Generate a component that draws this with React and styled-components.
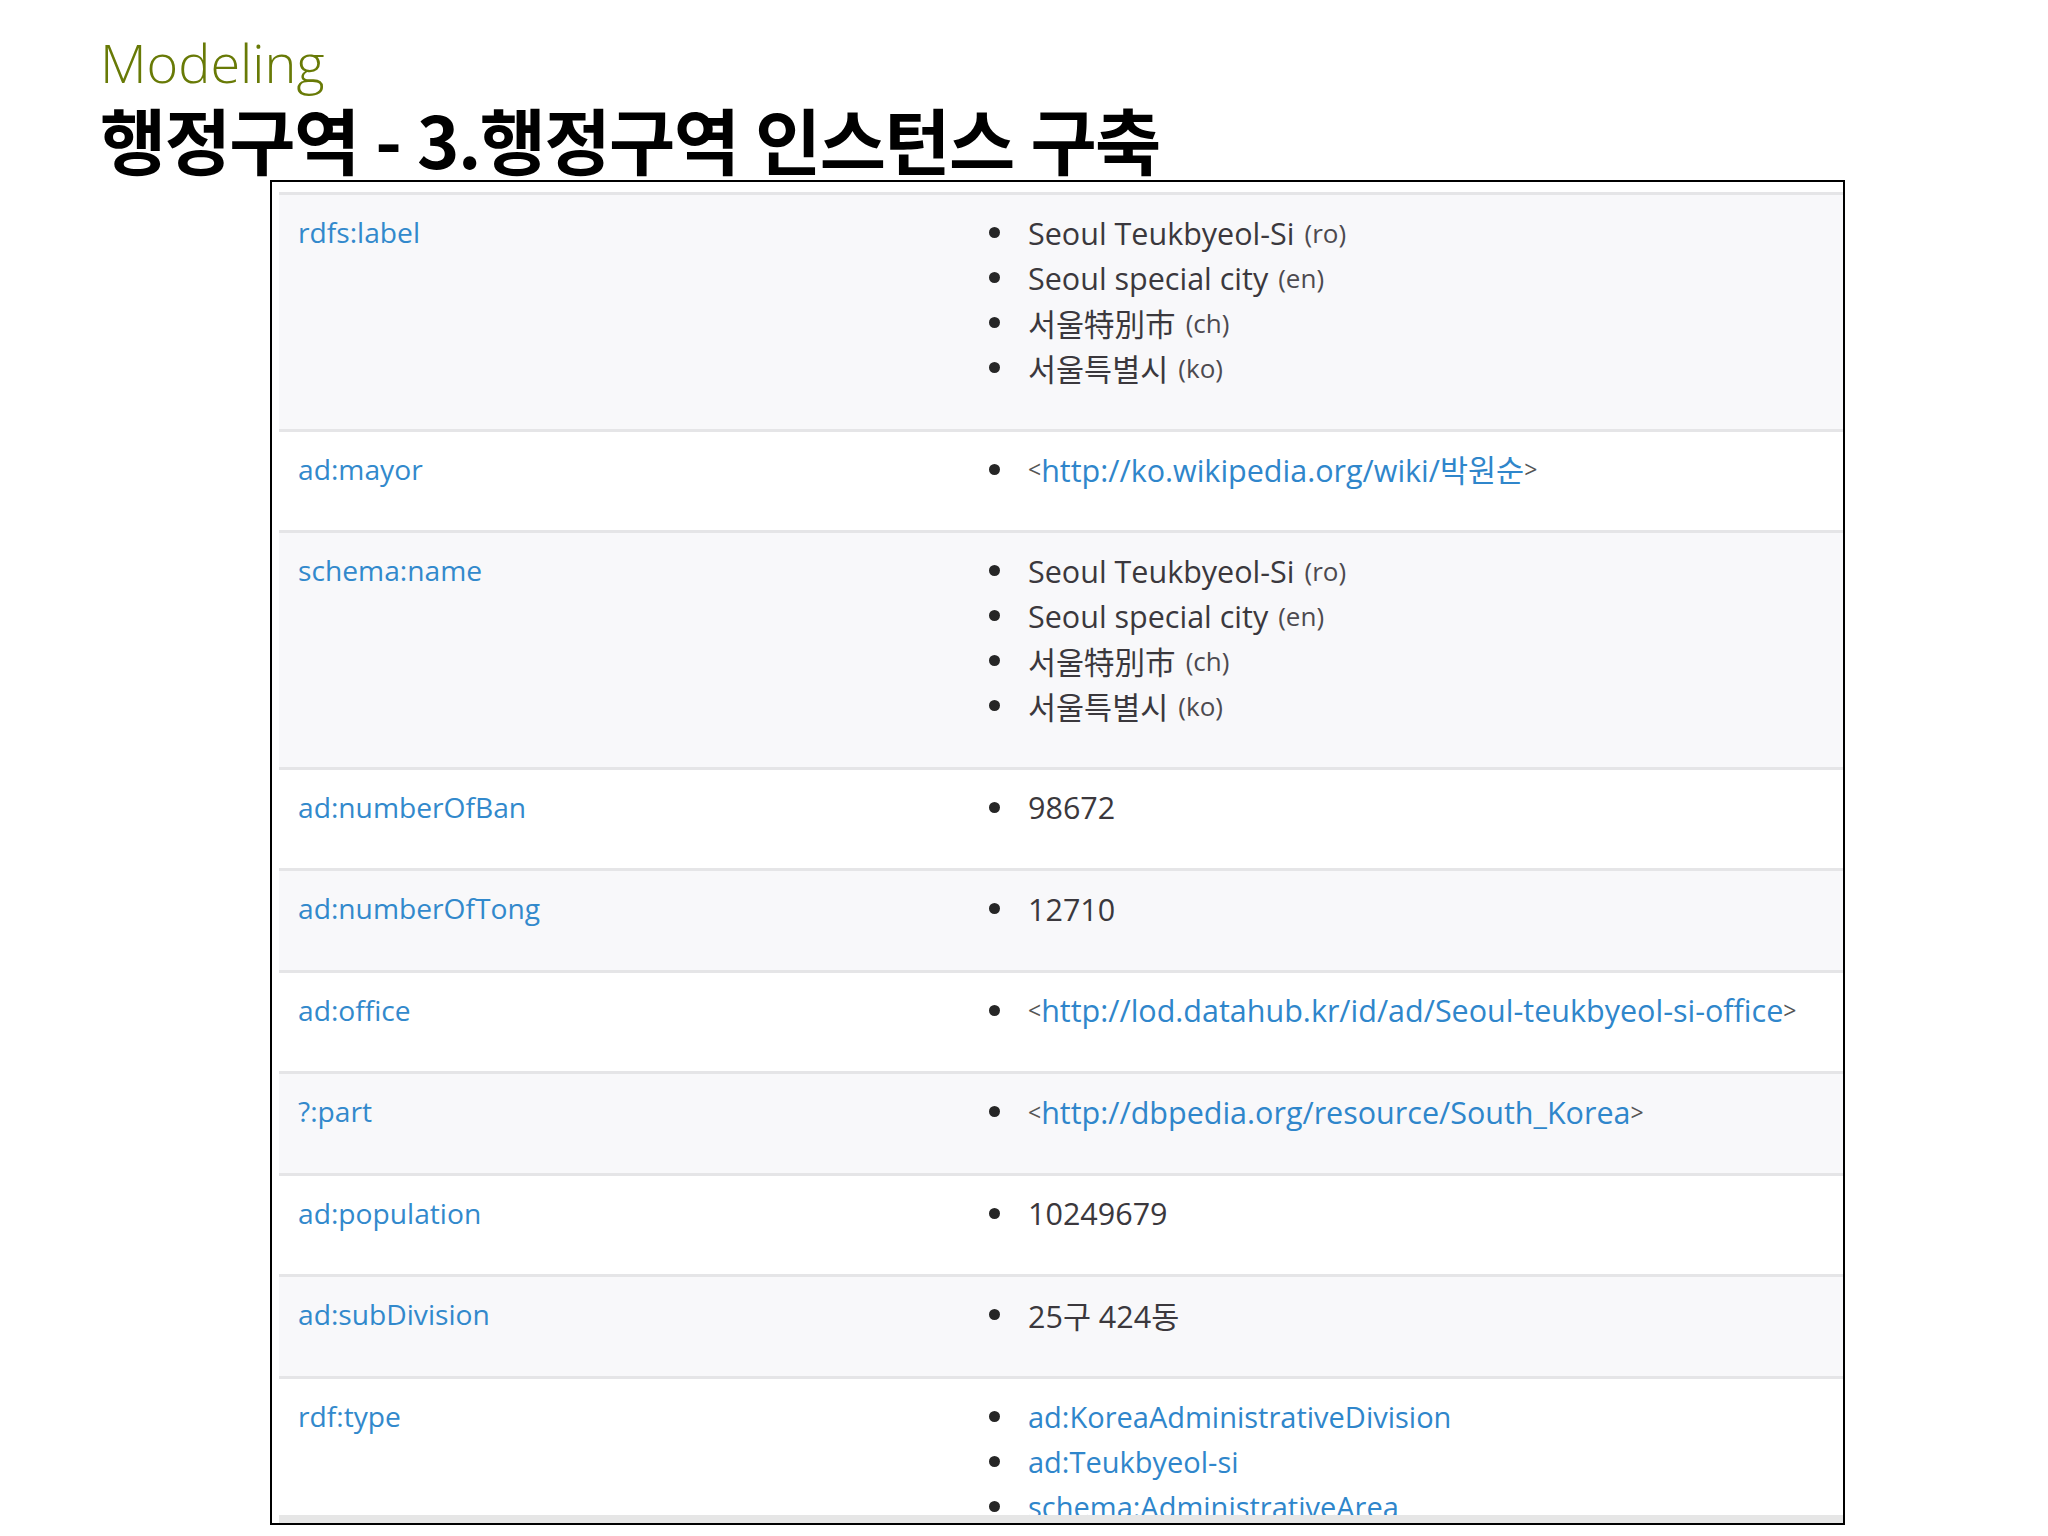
import React from 'react'
import styled, { createGlobalStyle } from 'styled-components'

const GlobalStyle = createGlobalStyle`
  html, body {
    margin: 0;
    padding: 0;
    background: #fff;
  }
  body {
    width: 2048px;
    height: 1536px;
    overflow: hidden;
    font-family: 'Open Sans', 'Noto Sans CJK KR', sans-serif;
  }
`

const Slide = styled.div`
  padding: 30px 0 0 100px;
`

const Kicker = styled.div`
  font-family: 'Open Sans', sans-serif;
  font-weight: 300;
  font-size: 54px;
  line-height: 64px;
  color: #687a06;
`

const Title = styled.h1`
  margin: 4px 0 0 0;
  font-family: 'Noto Sans CJK KR', sans-serif;
  font-weight: 700;
  font-size: 72px;
  line-height: 80px;
  letter-spacing: -1.6px;
  word-spacing: 2px;
  color: #000;
`

const Frame = styled.div`
  box-sizing: border-box;
  margin: 2px 0 0 170px;
  width: 1575px;
  height: 1345px;
  border: 2px solid #000;
  padding: 10px 0 0 7px;
  display: flex;
  flex-direction: column;
  background: #fff;
`

const Rows = styled.div`
  flex: 1;
  overflow: hidden;
`

const ScrollStrip = styled.div`
  height: 8px;
  background: #e6e6e6;
`

const Row = styled.div`
  display: grid;
  grid-template-columns: 711px 1fr;
  border-top: 3px solid #e5e5e7;
  padding: 15px 0 38.5px;
  background: ${p => (p.shaded ? '#f8f8fa' : '#fff')};
`

const Prop = styled.div`
  padding-left: 19px;
  font-size: 28.2px;
  line-height: 45px;
  color: #3289cc;
`

const Values = styled.ul`
  list-style: none;
  margin: 0;
  padding: 0;
`

const Item = styled.li`
  display: flex;
  align-items: center;
  height: 45px;
  font-size: ${p => (p.small ? '29px' : '30.5px')};
  color: ${p => (p.link ? '#2f86cb' : '#3b383d')};
  white-space: nowrap;
`

const Dot = styled.span`
  flex: none;
  width: 11px;
  height: 11px;
  border-radius: 50%;
  background: #262626;
  margin: 0 28px 0 -1px;
`

const Angle = styled.span`
  font-size: 23px;
  color: #555;
`

const Lang = styled.span`
  margin-left: 10px;
  font-size: 26px;
  color: #4d4a50;
`

const rows = [
  {
    prop: 'rdfs:label',
    values: [
      { text: 'Seoul Teukbyeol-Si', lang: 'ro' },
      { text: 'Seoul special city', lang: 'en' },
      { text: '서울特別市', lang: 'ch' },
      { text: '서울특별시', lang: 'ko' },
    ],
  },
  { prop: 'ad:mayor', values: [{ text: 'http://ko.wikipedia.org/wiki/박원순', uri: true }] },
  {
    prop: 'schema:name',
    values: [
      { text: 'Seoul Teukbyeol-Si', lang: 'ro' },
      { text: 'Seoul special city', lang: 'en' },
      { text: '서울特別市', lang: 'ch' },
      { text: '서울특별시', lang: 'ko' },
    ],
  },
  { prop: 'ad:numberOfBan', values: [{ text: '98672' }] },
  { prop: 'ad:numberOfTong', values: [{ text: '12710' }] },
  { prop: 'ad:office', values: [{ text: 'http://lod.datahub.kr/id/ad/Seoul-teukbyeol-si-office', uri: true }] },
  { prop: '?:part', values: [{ text: 'http://dbpedia.org/resource/South_Korea', uri: true }] },
  { prop: 'ad:population', values: [{ text: '10249679' }] },
  { prop: 'ad:subDivision', values: [{ text: '25구 424동' }] },
  {
    prop: 'rdf:type',
    values: [
      { text: 'ad:KoreaAdministrativeDivision', link: true },
      { text: 'ad:Teukbyeol-si', link: true },
      { text: 'schema:AdministrativeArea', link: true },
    ],
  },
]

function Value({ v }) {
  if (v.uri) {
    return (
      <Item link>
        <Dot />
        <Angle>&lt;</Angle>
        {v.text}
        <Angle>&gt;</Angle>
      </Item>
    )
  }
  return (
    <Item link={v.link} small={v.link}>
      <Dot />
      {v.text}
      {v.lang && <Lang>({v.lang})</Lang>}
    </Item>
  )
}

export default function App() {
  return (
    <Slide>
      <GlobalStyle />
      <Kicker>Modeling</Kicker>
      <Title>행정구역 - 3.행정구역 인스턴스 구축</Title>
      <Frame>
        <Rows>
          {rows.map((r, i) => (
            <Row key={r.prop} shaded={i % 2 === 0}>
              <Prop>{r.prop}</Prop>
              <Values>
                {r.values.map(v => (
                  <Value key={v.text} v={v} />
                ))}
              </Values>
            </Row>
          ))}
        </Rows>
        <ScrollStrip />
      </Frame>
    </Slide>
  )
}
